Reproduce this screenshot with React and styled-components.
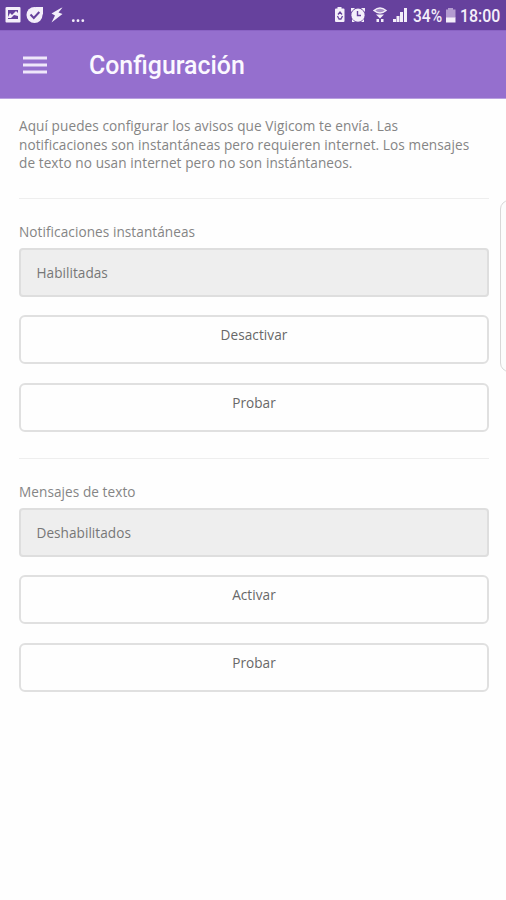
import React from 'react';
import styled, { createGlobalStyle } from 'styled-components';

const GlobalStyle = createGlobalStyle`
  * { box-sizing: border-box; }
  body { margin: 0; background: #fefefe; }
`;

const Screen = styled.div`
  position: relative;
  width: 506px;
  height: 900px;
  overflow: hidden;
  background: #fefefe;
  font-family: 'Open Sans', sans-serif;
`;

const StatusBar = styled.div`
  display: flex;
  justify-content: space-between;
  height: 30px;
  background: #66419d;
  color: #f4effa;
  font: 500 18.5px/32px Roboto, sans-serif;
`;

const StatusIcons = styled.svg`
  display: block;
  flex: none;
`;

const StatusGroup = styled.div`
  display: flex;
`;

const StatusText = styled.span`
  width: ${(p) => p.$width}px;
  white-space: nowrap;
  transform: scaleX(${(p) => p.$stretch});
  transform-origin: left;
`;

const AppBar = styled.header`
  display: flex;
  align-items: center;
  height: 69px;
  padding-left: 23px;
  background: #956fce;
  border-top: 1px solid #8a63c4;
  border-bottom: 1px solid #b9a0e0;
`;

const MenuIcon = styled.svg`
  display: block;
  margin-right: 42px;
`;

const Title = styled.h1`
  margin: 3px 0 0;
  color: #fbf8ff;
  font: 500 24.9px/30px Roboto, sans-serif;
`;

const Content = styled.main`
  padding: 18px 17px 0 19px;
`;

const Intro = styled.p`
  margin: 0;
  color: #858585;
  font-size: 13.6px;
  letter-spacing: 0.08px;
  line-height: 18.5px;
  white-space: nowrap;
`;

const IntroLine = styled.span`
  display: block;
`;

const Section = styled.section`
  margin-top: ${(p) => p.$gap}px;
  border-top: 1px solid #eeeeee;
  padding-top: 24px;
`;

const Label = styled.div`
  height: 25px;
  color: #858585;
  font-size: 13.6px;
  letter-spacing: 0.07px;
  line-height: 18px;
`;

const Field = styled.div`
  height: 49px;
  padding: 0 15.5px;
  border: 2px solid #dedede;
  border-radius: 4px;
  background: #eeeeee;
  color: #777777;
  font-size: 13.6px;
  letter-spacing: 0.04px;
  line-height: 46px;
`;

const ButtonStack = styled.div`
  display: grid;
  gap: 19px;
  margin-top: 18px;
`;

const Button = styled.button`
  display: block;
  width: 100%;
  height: 49px;
  margin: 0;
  padding: 0 0 9px;
  border: 2px solid #e0e0e0;
  border-radius: 6px;
  background: #fefefe;
  color: #686868;
  font: 13.6px/20px 'Open Sans', sans-serif;
  letter-spacing: 0.06px;
`;

const EdgeHandle = styled.div`
  position: absolute;
  top: 200px;
  left: 500px;
  width: 20px;
  height: 172px;
  border: 1px solid #d8d8d8;
  border-radius: 9px;
  background: #fcfcfc;
`;

function NotificationIcons() {
  return (
    <StatusIcons width="100" height="30" viewBox="0 0 100 30">
      <path fill="#f4effa" fillRule="evenodd" d="M7 7h12.5q1 0 1 1v13.5q0 1-1 1H6.5q-1 0-1-1V8q0-1 1.5-1zm1 3v9h10v-9z" />
      <path d="M8 17l2-4 2 2 4-4 2 2v3l-4-1-3 3H8z" fill="#f4effa" />
      <circle cx="34.5" cy="15" r="8" fill="#f4effa" />
      <path d="M35 7h8v8z" fill="#f4effa" />
      <path d="M30.5 14.5l3.3 3.5 5.5-6" fill="none" stroke="#66419d" strokeWidth="2" />
      <path fill="#f4effa" d="M61 8l-9.5 5.5 3.5 2-3.5 7 11-8.5-4-1.5 4-5z" />
      <g fill="#f4effa">
        <circle cx="73.3" cy="20.7" r="1.4" />
        <circle cx="78" cy="20.7" r="1.4" />
        <circle cx="82.8" cy="20.7" r="1.4" />
      </g>
    </StatusIcons>
  );
}

function SystemIcons() {
  return (
    <StatusIcons width="79" height="30" viewBox="334 0 79 30">
      <g fill="#f4effa">
        <path d="M336 8.5h1.5V7h4v1.5h2q1 0 1 1V21q0 1-1 1h-7.5q-1 0-1-1V9.5q0-1 1-1z" />
        <path d="M351 8h4l-4 4zM365 8h-4l4 4zM352 22v-3l3 3zM364 22v-3l-3 3z" />
        <rect x="393" y="19" width="3" height="3" />
        <rect x="396.5" y="16" width="3" height="6" />
        <rect x="400" y="12" width="3" height="10" />
        <rect x="404" y="8" width="3" height="14" />
        <path d="M376 14.5l4 4 4-4z" />
        <rect x="376.5" y="19" width="2.5" height="3" />
        <rect x="381" y="19" width="2.5" height="3" />
      </g>
      <circle cx="358" cy="15.2" r="6.6" fill="#f4effa" />
      <path d="M338 14.5l2-2.5 2 2.5M337.5 16l1.2 2.5M342.5 16l-1.2 2.5M338.5 19h3" fill="none" stroke="#66419d" strokeWidth="1.3" />
      <path d="M357.5 11v4.5h3.5" fill="none" stroke="#66419d" strokeWidth="1.4" />
      <path d="M374 10.5q6-5 12 0q-6 5-12 0z" fill="#f4effa" fillOpacity="0.45" stroke="#f4effa" strokeWidth="1.5" />
    </StatusIcons>
  );
}

function BatteryIcon() {
  return (
    <StatusIcons width="17" height="30" viewBox="0 0 17 30">
      <path d="M3 9.5h2V8h5v1.5h2.5V18H3z" fill="#b39bd0" />
      <path d="M3 17.5h9.5v5H3z" fill="#f4effa" />
    </StatusIcons>
  );
}

export default function App() {
  return (
    <Screen>
      <GlobalStyle />
      <StatusBar>
        <NotificationIcons />
        <StatusGroup>
          <SystemIcons />
          <StatusText $width={30} $stretch={0.84}>34%</StatusText>
          <BatteryIcon />
          <StatusText $width={46} $stretch={0.86}>18:00</StatusText>
        </StatusGroup>
      </StatusBar>
      <AppBar>
        <MenuIcon width="24" height="20" viewBox="0 0 24 20">
          <path d="M0 3h24M0 10h24M0 17h24" stroke="#efe7fa" strokeWidth="3" />
        </MenuIcon>
        <Title>Configuración</Title>
      </AppBar>
      <Content>
        <Intro>
          <IntroLine>Aquí puedes configurar los avisos que Vigicom te envía. Las</IntroLine>
          <IntroLine>notificaciones son instantáneas pero requieren internet. Los mensajes</IntroLine>
          <IntroLine>de texto no usan internet pero no son instántaneos.</IntroLine>
        </Intro>
        <Section $gap={25}>
          <Label>Notificaciones instantáneas</Label>
          <Field>Habilitadas</Field>
          <ButtonStack>
            <Button>Desactivar</Button>
            <Button>Probar</Button>
          </ButtonStack>
        </Section>
        <Section $gap={26}>
          <Label>Mensajes de texto</Label>
          <Field>Deshabilitados</Field>
          <ButtonStack>
            <Button>Activar</Button>
            <Button>Probar</Button>
          </ButtonStack>
        </Section>
      </Content>
      <EdgeHandle />
    </Screen>
  );
}
